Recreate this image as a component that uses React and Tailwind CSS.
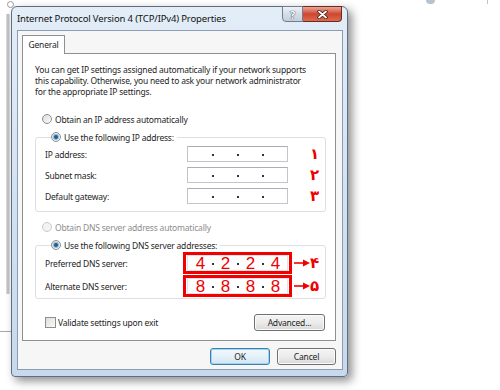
import React from "react";

function Radio({ checked, disabled, label }) {
  return (
    <div className="flex items-center h-[12px]">
      <span
        className={
          disabled
            ? "w-[10px] h-[10px] rounded-full border border-[#c9c9c9] bg-[#f3f3f3] flex items-center justify-center"
            : "w-[10px] h-[10px] rounded-full border border-[#8e8f8f] bg-gradient-to-br from-[#dcdcdc] to-[#fbfbfb] flex items-center justify-center"
        }
      >
        {checked && (
          <span className="w-[4px] h-[4px] rounded-full bg-[#1f5f92] shadow-[0_0_0_1px_#8cb9dd]" />
        )}
      </span>
      <span className={disabled ? "ml-[3px] text-[#8d8d8d]" : "ml-[3px] text-[#1e1e1e]"}>
        {label}
      </span>
    </div>
  );
}

function Segments({ values, big }) {
  return (
    <div className="flex items-center h-full pl-[2px]">
      {[0, 1, 2, 3].map((i) => (
        <React.Fragment key={i}>
          <span
            className={
              big
                ? "w-[21px] text-center text-[17px] leading-none tracking-normal text-[#f00000] font-['Liberation_Sans',sans-serif]"
                : "w-[21px] text-center"
            }
          >
            {values ? values[i] : ""}
          </span>
          {i < 3 && (
            <span className="w-[4px] flex justify-center pt-[2px]">
              <span className="w-[1.5px] h-[1.5px] bg-[#333]" />
            </span>
          )}
        </React.Fragment>
      ))}
    </div>
  );
}

function IpBox() {
  return (
    <div className="w-[101px] h-[16px] border border-[#c2c5cc] border-t-[#abadb3] bg-white">
      <Segments />
    </div>
  );
}

function RedIpBox({ values }) {
  return (
    <div className="border-[3px] border-[#f20000] px-[1px] bg-white">
      <div className="w-[101px] h-[16px] border border-[#e1e3e8] bg-white">
        <Segments values={values} big />
      </div>
    </div>
  );
}

function Arrow() {
  return (
    <svg width="16" height="8" viewBox="0 0 16 8" className="block">
      <line x1="0" y1="4" x2="11" y2="4" stroke="#f00000" strokeWidth="1.6" />
      <polygon points="9,0.5 16,4 9,7.5" fill="#f00000" />
    </svg>
  );
}

function Anno({ children }) {
  return (
    <span className="text-[15px] leading-none tracking-normal text-[#f00000] font-['DejaVu_Sans',sans-serif] font-bold">
      {children}
    </span>
  );
}

function Button({ children, width, primary }) {
  return (
    <div
      className={
        primary
          ? "h-[17px] rounded-[3px] border border-[#3c7fb1] shadow-[inset_0_0_0_1px_#9fd3f0] bg-gradient-to-b from-[#f3f8fc] via-[#e5f1f9] to-[#d2e6f3] flex items-center justify-center"
          : "h-[17px] rounded-[3px] border border-[#707070] shadow-[inset_0_0_0_1px_#fbfbfb] bg-gradient-to-b from-[#f4f4f4] via-[#ececec] to-[#d9d9d9] flex items-center justify-center"
      }
      style={{ width }}
    >
      <span className="text-[#1e1e1e]">{children}</span>
    </div>
  );
}

export default function App() {
  return (
    <div className="w-[500px] h-[390px] bg-white relative overflow-hidden pt-[6px] pl-[11px] font-['Noto_Sans','Open_Sans',sans-serif] text-[8.5px] tracking-[-0.2px] leading-[11px] text-[#1e1e1e]">
      {/* background remnants of other windows */}
      <div className="absolute left-[6px] top-[14px] w-[4px] h-[280px] bg-gradient-to-r from-[#e4e4e4] via-[#b9b9b9] to-[#e8e8e8]" />
      <div className="absolute left-0 top-[331px] w-[12px] h-[1px] bg-[#a8a8a8]" />
      <div className="absolute left-[7px] top-[1px] w-[7px] h-[7px] rounded-full border border-[#9a9a9a] bg-white" />
      <div className="absolute left-[426px] top-[-4px] w-[9px] h-[8px] rounded-full bg-[#b7c3cf]" />
      <div className="absolute left-[487px] top-0 w-[1px] h-[4px] bg-[#c4c4c4]" />

      {/* window */}
      <div className="relative w-[337px] rounded-t-[6px] rounded-b-[4px] border border-[#5f6e80] bg-gradient-to-b from-[#e3edf8] via-[#d3e2f2] to-[#c8d9ed] shadow-[4px_4px_10px_rgba(0,0,0,0.45)] flex flex-col">
        {/* title bar */}
        <div className="h-[23px] flex items-start justify-between pl-[5px]">
          <span className="mt-[6px] text-[9.5px] tracking-[-0.15px] leading-[12px] text-[#111] whitespace-nowrap">
            Internet Protocol Version 4 (TCP/IPv4) Properties
          </span>
          <div className="flex mr-[5px] -mt-px">
            <div className="w-[21px] h-[16px] rounded-bl-[4px] border border-[#6f7d8f] bg-gradient-to-b from-[#eef2f7] via-[#d5dde7] to-[#c4cfdc] flex items-center justify-center">
              <span className="text-[11px] leading-none font-bold tracking-normal text-white [text-shadow:0_0_1px_#2c3a4c,0_0_1px_#2c3a4c]">
                ?
              </span>
            </div>
            <div className="w-[39px] h-[16px] rounded-br-[4px] border border-l-0 border-[#6b2b22] bg-gradient-to-b from-[#eba796] via-[#cd4630] to-[#dc6a4c] flex items-center justify-center">
              <svg width="11" height="9" viewBox="0 0 11 9">
                <path d="M2 1.5 L9 7.5 M9 1.5 L2 7.5" stroke="#3b1c18" strokeWidth="3.4" strokeLinecap="round" />
                <path d="M2 1.5 L9 7.5 M9 1.5 L2 7.5" stroke="#ffffff" strokeWidth="1.8" strokeLinecap="round" />
              </svg>
            </div>
          </div>
        </div>

        {/* client area */}
        <div className="ml-[5px] mr-[4px] mb-[6px] border border-[#8c9db3] bg-[#f6f6f6] pt-[4px] pl-[4px] pr-[6px] pb-[4px] flex flex-col">
          {/* tab strip */}
          <div className="flex">
            <div className="relative z-10 w-[43px] h-[19px] border border-b-0 border-[#8d8f93] bg-white flex items-center justify-center pb-[1px]">
              General
            </div>
          </div>

          {/* tab page */}
          <div className="-mt-px border border-[#8d8f93] bg-white pt-[10px] pb-[9px] flex flex-col">
            <p className="pl-[12px] whitespace-nowrap">
              You can get IP settings assigned automatically if your network supports
              <br />
              this capability. Otherwise, you need to ask your network administrator
              <br />
              for the appropriate IP settings.
            </p>

            <div className="mt-[16px] pl-[19px]">
              <Radio label="Obtain an IP address automatically" />
            </div>

            <fieldset className="mt-[6px] ml-[12px] w-[291px] border border-[#dcdfe3] rounded-[3px] pt-[3px] pb-[7px] pl-[9px]">
              <legend className="ml-[6px] pr-[3px]">
                <Radio checked label="Use the following IP address:" />
              </legend>
              <div className="flex flex-col gap-[5px]">
                {[
                  ["IP address:", "\u06F1"],
                  ["Subnet mask:", "\u06F2"],
                  ["Default gateway:", "\u06F3"],
                ].map(([label, num]) => (
                  <div key={label} className="flex items-center h-[16px]">
                    <span className="w-[142px]">{label}</span>
                    <IpBox />
                    <span className="ml-[22px] flex items-center">
                      <Anno>{num}</Anno>
                    </span>
                  </div>
                ))}
              </div>
            </fieldset>

            <div className="mt-[9px] pl-[19px]">
              <Radio disabled label="Obtain DNS server address automatically" />
            </div>

            <fieldset className="mt-[6px] ml-[12px] w-[291px] border border-[#dcdfe3] rounded-[3px] pt-[1px] pb-[1px] pl-[9px]">
              <legend className="ml-[6px] pr-[3px]">
                <Radio checked label="Use the following DNS server addresses:" />
              </legend>
              <div className="flex flex-col gap-[1px]">
                {[
                  ["Preferred DNS server:", ["4", "2", "2", "4"], "\u06F4"],
                  ["Alternate DNS server:", ["8", "8", "8", "8"], "\u06F5"],
                ].map(([label, vals, num]) => (
                  <div key={label} className="flex items-center">
                    <span className="w-[138px]">{label}</span>
                    <RedIpBox values={vals} />
                    <span className="ml-[2px] flex items-center gap-0">
                      <Arrow />
                      <Anno>{num}</Anno>
                    </span>
                  </div>
                ))}
              </div>
            </fieldset>

            <div className="mt-[14px] pl-[22px] pr-[10px] flex items-center justify-between h-[18px]">
              <div className="flex items-center">
                <span className="w-[11px] h-[11px] border border-[#8e8f8f] bg-gradient-to-br from-[#dedede] to-[#fafafa]" />
                <span className="ml-[2px]">Validate settings upon exit</span>
              </div>
              <Button width="71px">Advanced...</Button>
            </div>
          </div>

          {/* dialog buttons */}
          <div className="mt-[7px] flex justify-end gap-[7px]">
            <Button width="60px" primary>
              OK
            </Button>
            <Button width="59px">Cancel</Button>
          </div>
        </div>
      </div>
    </div>
  );
}
